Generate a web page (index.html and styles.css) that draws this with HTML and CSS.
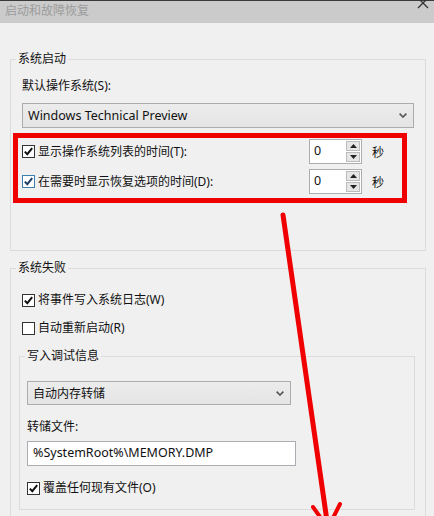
FILE: index.html
```html
<!DOCTYPE html>
<html lang="zh-CN">
<head>
    <meta charset="UTF-8">
    <title>启动和故障恢复</title>
    <link rel="stylesheet" href="styles.css">
</head>
<body>
    <div class="window">
        <div class="titlebar">
            <span class="title">启动和故障恢复</span>
            <svg class="close" width="12" height="12" viewBox="0 0 12 12">
                <path d="M1 1 L11 11 M11 1 L1 11" stroke="#333" stroke-width="1.3" fill="none"/>
            </svg>
        </div>

        <div class="content">
            <fieldset class="group">
                <legend>系统启动</legend>
                <div class="field-label">默认操作系统(S):</div>
                <div class="select select-os">
                    <span>Windows Technical Preview</span>
                    <svg width="8" height="5" viewBox="0 0 8 5"><path d="M0.6 0.6 L4 4 L7.4 0.6" fill="none" stroke="#555" stroke-width="1.6"/></svg>
                </div>

                <div class="highlight">
                    <div class="row">
                        <label class="check">
                            <span class="box"><svg viewBox="0 0 11 11"><path d="M1.8 5.6 L4.3 8.2 L9.2 2.2" stroke="#111" stroke-width="2" fill="none"/></svg></span>
                            显示操作系统列表的时间(T):
                        </label>
                        <div class="spin">
                            <span class="spin-value">0</span>
                            <span class="spin-btns">
                                <span class="spin-btn"><svg width="7" height="4" viewBox="0 0 7 4"><path d="M0 4 L3.5 0 L7 4 Z" fill="#222"/></svg></span>
                                <span class="spin-btn"><svg width="7" height="4" viewBox="0 0 7 4"><path d="M0 0 L3.5 4 L7 0 Z" fill="#222"/></svg></span>
                            </span>
                        </div>
                        <span class="unit">秒</span>
                    </div>
                    <div class="row">
                        <label class="check">
                            <span class="box focused"><svg viewBox="0 0 11 11"><path d="M1.8 5.6 L4.3 8.2 L9.2 2.2" stroke="#1d3f66" stroke-width="2" fill="none"/></svg></span>
                            在需要时显示恢复选项的时间(D):
                        </label>
                        <div class="spin">
                            <span class="spin-value">0</span>
                            <span class="spin-btns">
                                <span class="spin-btn"><svg width="7" height="4" viewBox="0 0 7 4"><path d="M0 4 L3.5 0 L7 4 Z" fill="#222"/></svg></span>
                                <span class="spin-btn"><svg width="7" height="4" viewBox="0 0 7 4"><path d="M0 0 L3.5 4 L7 0 Z" fill="#222"/></svg></span>
                            </span>
                        </div>
                        <span class="unit">秒</span>
                    </div>
                </div>
            </fieldset>

            <fieldset class="group failure">
                <legend>系统失败</legend>
                <label class="check first">
                    <span class="box"><svg viewBox="0 0 11 11"><path d="M1.8 5.6 L4.3 8.2 L9.2 2.2" stroke="#111" stroke-width="2" fill="none"/></svg></span>
                    将事件写入系统日志(W)
                </label>
                <label class="check second">
                    <span class="box"></span>
                    自动重新启动(R)
                </label>

                <fieldset class="group inner">
                    <legend>写入调试信息</legend>
                    <div class="select select-dump">
                        <span>自动内存转储</span>
                        <svg width="8" height="5" viewBox="0 0 8 5"><path d="M0.6 0.6 L4 4 L7.4 0.6" fill="none" stroke="#555" stroke-width="1.6"/></svg>
                    </div>
                    <div class="field-label dump-label">转储文件:</div>
                    <div class="textbox">%SystemRoot%\MEMORY.DMP</div>
                    <label class="check overwrite">
                        <span class="box"><svg viewBox="0 0 11 11"><path d="M1.8 5.6 L4.3 8.2 L9.2 2.2" stroke="#111" stroke-width="2" fill="none"/></svg></span>
                        覆盖任何现有文件(O)
                    </label>
                </fieldset>
            </fieldset>
        </div>

        <!-- annotation arrow drawn over the dialog -->
        <svg class="arrow" width="434" height="516" viewBox="0 0 434 516">
            <path d="M283 215 L328 528" stroke="#f00000" stroke-width="5" stroke-linecap="round" fill="none"/>
            <path d="M313 507 L328 528 L340 504" stroke="#f00000" stroke-width="4" stroke-linecap="round" stroke-linejoin="round" fill="none"/>
        </svg>
    </div>
</body>
</html>
```

FILE: styles.css
```css
* {
    margin: 0;
    padding: 0;
    box-sizing: border-box;
}

body {
    font-family: "Noto Sans", "Noto Sans CJK SC", sans-serif;
    font-size: 12px;
    color: #111;
    background: #f0f0f0;
    overflow: hidden;
}

.window {
    position: relative;
    width: 434px;
    height: 516px;
    background: #f0f0f0;
    overflow: hidden;
}

.titlebar {
    height: 23px;
    background: #cbcbcb;
    border-top: 1px solid #3a3a3a;
    display: flex;
    justify-content: space-between;
    padding: 0 5px 0 5px;
}

.title {
    color: #9c9c9c;
    line-height: 20px;
}

.close {
    margin-top: -4px;
}

.content {
    padding: 28px 8px 0 10px;
}

.group {
    border: 1px solid #dcdcdc;
    padding: 0 11px 47px 11px;
    min-width: 0;
}

.group legend {
    line-height: 16px;
    padding: 0 2px;
    margin-left: -6px;
}

.field-label {
    line-height: 16px;
    margin-top: 11px;
}

.select {
    display: flex;
    align-items: center;
    justify-content: space-between;
    background: linear-gradient(#ececec, #e4e4e4);
    border: 1px solid #acacac;
    padding: 0 6px 0 5px;
}

.select-os {
    height: 25px;
    margin-top: 9px;
    font-size: 12.5px;
}

.highlight {
    border: 5px solid #f00000;
    margin: 5px 7px 0 -9px;
    padding: 1px 17px 4px 4px;
    display: flex;
    flex-direction: column;
    gap: 5px;
}

.row {
    height: 25px;
    display: flex;
    align-items: center;
}

.row .check {
    flex: 1;
}

.check {
    display: flex;
    align-items: center;
    gap: 3px;
    line-height: 16px;
}

.box {
    width: 13px;
    height: 13px;
    background: #fff;
    border: 1px solid #333;
    display: flex;
    align-items: center;
    justify-content: center;
    flex-shrink: 0;
}

.box svg {
    width: 11px;
    height: 11px;
}

.box.focused {
    border-color: #3c7fb1;
}

.spin {
    width: 53px;
    height: 25px;
    display: flex;
    background: #fff;
    border: 1px solid #abadb3;
}

.spin-value {
    flex: 1;
    padding-left: 4px;
    line-height: 21px;
    font-size: 12.5px;
}

.spin-btns {
    width: 16px;
    display: flex;
    flex-direction: column;
    gap: 1px;
    padding: 1px;
}

.spin-btn {
    flex: 1;
    display: flex;
    align-items: center;
    justify-content: center;
    background: #e6e6e6;
    border: 1px solid #bcbcbc;
}

.unit {
    margin-left: 10px;
    width: 13px;
}

.failure {
    margin-top: 9px;
    padding-bottom: 10px;
}

.check.first {
    margin-top: 16px;
}

.check.second {
    margin-top: 12px;
}

.group.inner {
    margin: 12px -1px 0 -3px;
    padding: 0 7px 13px 7px;
}

.group.inner legend {
    margin-left: -2px;
}

.select-dump {
    width: 264px;
    height: 24px;
    margin-top: 17px;
}

.dump-label {
    margin-top: 14px;
}

.textbox {
    width: 269px;
    height: 25px;
    background: #fff;
    border: 1px solid #abadb3;
    padding-left: 5px;
    line-height: 22px;
    margin-top: 6px;
    font-size: 12.5px;
}

.check.overwrite {
    margin-top: 14px;
}

.arrow {
    position: absolute;
    top: 0;
    left: 0;
    pointer-events: none;
}
```
